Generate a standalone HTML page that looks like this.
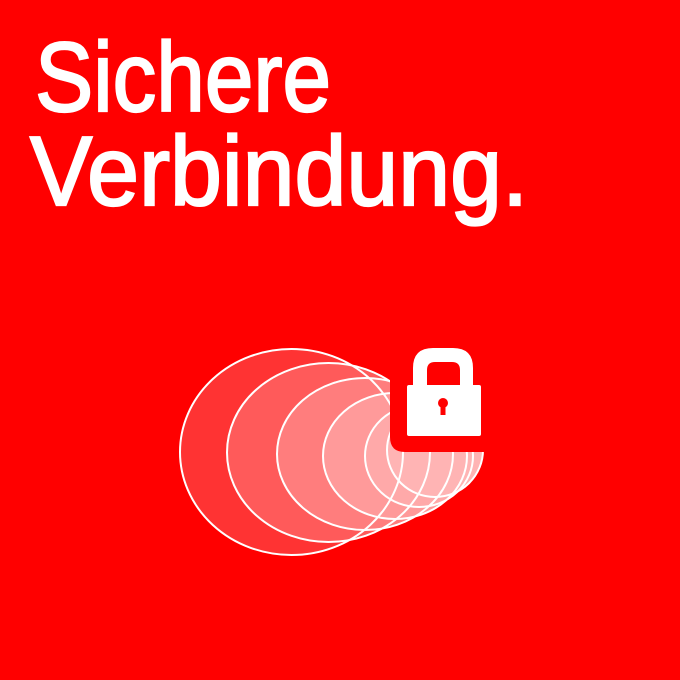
<!DOCTYPE html>
<html><head><style>
html,body{margin:0;padding:0;background:#ff0000;}
svg{display:block}
</style></head><body>
<svg width="680" height="680" viewBox="0 0 680 680" xmlns="http://www.w3.org/2000/svg">
<rect width="680" height="680" fill="#ff0000"/>
<g font-family="Liberation Sans, sans-serif" fill="#fff" stroke="#fff" stroke-width="2.2" font-size="98">
<text x="35" y="111" textLength="296" lengthAdjust="spacingAndGlyphs">Sichere</text>
<text x="30" y="205" textLength="498" lengthAdjust="spacingAndGlyphs">Verbindung.</text>
</g>
<g>
<ellipse cx="291.5" cy="452" rx="111.5" ry="103" fill="#ff3333"/>
<ellipse cx="328.5" cy="452.5" rx="101.5" ry="89.5" fill="#ff5a5a"/>
<ellipse cx="365" cy="454" rx="88" ry="76" fill="#ff7d7d"/>
<ellipse cx="395" cy="456" rx="72" ry="63" fill="#ff9a9a"/>
<ellipse cx="419" cy="456" rx="54" ry="51" fill="#ffa9a9"/>
<ellipse cx="435" cy="450" rx="48" ry="47" fill="#ffb4b4"/>
</g>
<g stroke="#fff" stroke-width="2" fill="none">
<ellipse cx="291.5" cy="452" rx="111.5" ry="103"/>
<ellipse cx="328.5" cy="452.5" rx="101.5" ry="89.5"/>
<ellipse cx="365" cy="454" rx="88" ry="76"/>
<ellipse cx="395" cy="456" rx="72" ry="63"/>
<ellipse cx="419" cy="456" rx="54" ry="51"/>
<ellipse cx="435" cy="450" rx="48" ry="47"/>
</g>
<path d="M390 345 H487 V452 H405 Q390 452 390 437 Z" fill="#ff0000"/>
<path d="M413 385 V368 Q413 348 433 348 H453 Q473 348 473 368 V385 H460 V370 Q460 362 452 362 H435 Q427 362 427 370 V385 Z" fill="#fff"/>
<rect x="407" y="385" width="74" height="51" rx="2" fill="#fff"/>
<circle cx="443" cy="403" r="5" fill="#ff0000"/>
<rect x="440.5" y="404" width="5" height="11" fill="#ff0000"/>
</svg>
</body></html>
